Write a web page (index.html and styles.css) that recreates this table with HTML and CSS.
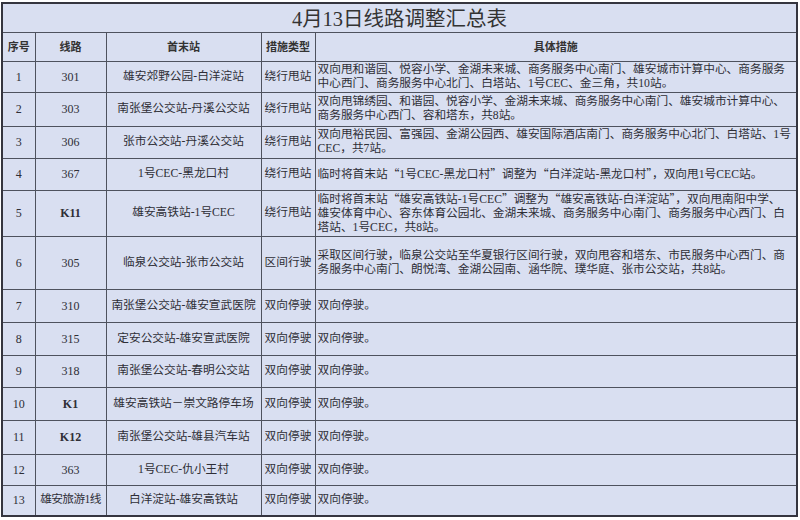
FILE: index.html
```html
<!DOCTYPE html>
<html lang="zh-CN">
<head>
<meta charset="utf-8">
<title>4月13日线路调整汇总表</title>
<link rel="stylesheet" href="styles.css">
</head>
<body>
<div class="wrap">
<table class="sheet">
  <colgroup>
    <col class="c1"><col class="c2"><col class="c3"><col class="c4"><col class="c5">
  </colgroup>
  <tr class="h29"><td class="title" colspan="5">4月13日线路调整汇总表</td></tr>
  <tr class="h29 head">
    <td>序号</td><td>线路</td><td>首末站</td><td>措施类型</td><td>具体措施</td>
  </tr>
  <tr class="h31">
    <td class="num">1</td><td class="num">301</td><td class="mid">雄安郊野公园-白洋淀站</td><td class="mid">绕行甩站</td>
    <td class="desc">双向甩和谐园、悦容小学、金湖未来城、商务服务中心南门、雄安城市计算中心、商务服务<br>中心西门、商务服务中心北门、白塔站、1号CEC、金三角，共10站。</td>
  </tr>
  <tr class="h34">
    <td class="num">2</td><td class="num">303</td><td class="mid">南张堡公交站-丹溪公交站</td><td class="mid">绕行甩站</td>
    <td class="desc">双向甩锦绣园、和谐园、悦容小学、金湖未来城、商务服务中心南门、雄安城市计算中心、<br>商务服务中心西门、容和塔东，共8站。</td>
  </tr>
  <tr class="h32">
    <td class="num">3</td><td class="num">306</td><td class="mid">张市公交站-丹溪公交站</td><td class="mid">绕行甩站</td>
    <td class="desc">双向甩裕民园、富强园、金湖公园西、雄安国际酒店南门、商务服务中心北门、白塔站、1号<br>CEC，共7站。</td>
  </tr>
  <tr class="h32">
    <td class="num">4</td><td class="num">367</td><td class="mid">1号CEC-黑龙口村</td><td class="mid">绕行甩站</td>
    <td class="desc">临时将首末站<span class="q">“</span>1号CEC-黑龙口村<span class="q">”</span>调整为<span class="q">“</span>白洋淀站-黑龙口村<span class="q">”</span>，双向甩1号CEC站。</td>
  </tr>
  <tr class="h46">
    <td class="num">5</td><td class="num bold">K11</td><td class="mid">雄安高铁站-1号CEC</td><td class="mid">绕行甩站</td>
    <td class="desc">临时将首末站<span class="q">“</span>雄安高铁站-1号CEC<span class="q">”</span>调整为<span class="q">“</span>雄安高铁站-白洋淀站<span class="q">”</span>，双向甩南阳中学、<br>雄安体育中心、容东体育公园北、金湖未来城、商务服务中心南门、商务服务中心西门、白<br>塔站、1号CEC，共8站。</td>
  </tr>
  <tr class="h53">
    <td class="num">6</td><td class="num">305</td><td class="mid">临泉公交站-张市公交站</td><td class="mid">区间行驶</td>
    <td class="desc">采取区间行驶，临泉公交站至华夏银行区间行驶，双向甩容和塔东、市民服务中心西门、商<br>务服务中心南门、朗悦湾、金湖公园南、涵华院、璞华庭、张市公交站，共8站。</td>
  </tr>
  <tr class="h33">
    <td class="num">7</td><td class="num">310</td><td class="mid">南张堡公交站-雄安宣武医院</td><td class="mid">双向停驶</td><td class="desc">双向停驶。</td>
  </tr>
  <tr class="h33">
    <td class="num">8</td><td class="num">315</td><td class="mid">定安公交站-雄安宣武医院</td><td class="mid">双向停驶</td><td class="desc">双向停驶。</td>
  </tr>
  <tr class="h32">
    <td class="num">9</td><td class="num">318</td><td class="mid">南张堡公交站-春明公交站</td><td class="mid">双向停驶</td><td class="desc">双向停驶。</td>
  </tr>
  <tr class="h33">
    <td class="num">10</td><td class="num bold">K1</td><td class="mid">雄安高铁站－崇文路停车场</td><td class="mid">双向停驶</td><td class="desc">双向停驶。</td>
  </tr>
  <tr class="h34">
    <td class="num">11</td><td class="num bold">K12</td><td class="mid">南张堡公交站-雄县汽车站</td><td class="mid">双向停驶</td><td class="desc">双向停驶。</td>
  </tr>
  <tr class="h31">
    <td class="num">12</td><td class="num">363</td><td class="mid">1号CEC-仇小王村</td><td class="mid">双向停驶</td><td class="desc">双向停驶。</td>
  </tr>
  <tr class="h31">
    <td class="num">13</td><td class="mid tight">雄安旅游1线</td><td class="mid">白洋淀站-雄安高铁站</td><td class="mid">双向停驶</td><td class="desc">双向停驶。</td>
  </tr>
</table>
</div>
</body>
</html>
```

FILE: styles.css
```css
html, body {
  margin: 0;
  padding: 0;
  background: #ffffff;
}

.wrap {
  padding: 2px 2px 0 1px;
}

.sheet {
  width: 797px;
  table-layout: fixed;
  border-collapse: collapse;
  background: #d9dff1;
  border: 2px solid #35353f;
  font-family: "Liberation Serif", "Noto Sans CJK SC", serif;
  color: #2e2e36;
  font-size: 11.7px;
  line-height: 14px;
}

.c1 { width: 33px; }
.c2 { width: 71px; }
.c3 { width: 155px; }
.c4 { width: 54px; }
.c5 { width: auto; }

.sheet td {
  border: 1px solid #4e525e;
  padding: 0 2px;
  vertical-align: middle;
  overflow: hidden;
  white-space: nowrap;
}

.h29 { height: 29px; }
.h31 { height: 31px; }
.h32 { height: 32px; }
.h33 { height: 33px; }
.h34 { height: 34px; }
.h46 { height: 46px; }
.h53 { height: 53px; }

.sheet td.title {
  text-align: center;
  font-size: 20.5px;
  line-height: 24px;
  color: #333;
  padding-top: 2px;
}

.head td {
  text-align: center;
  font-weight: 700;
  font-size: 11px;
  color: #333;
}

.num {
  text-align: center;
  font-size: 12px;
}

.num.bold {
  font-weight: 700;
}

.mid {
  text-align: center;
}

.tight {
  letter-spacing: -0.6px;
  padding: 0;
}

.sheet td.desc {
  text-align: left;
  padding: 0 1px 0 2px;
}

.q {
  font-family: "Noto Sans CJK SC", sans-serif;
}
```
